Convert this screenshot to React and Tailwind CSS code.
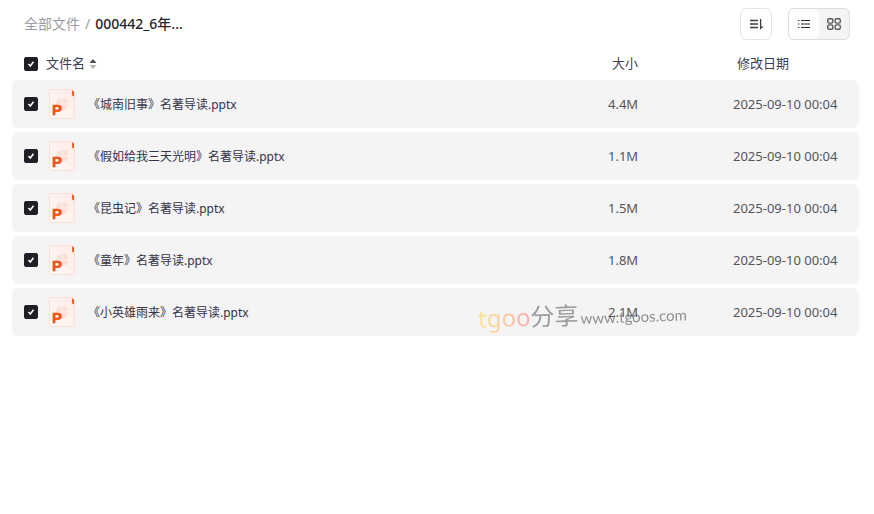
import { useState } from 'react';

const FILES = [
    { name: '《城南旧事》名著导读.pptx', size: '4.4M', date: '2025-09-10 00:04' },
    { name: '《假如给我三天光明》名著导读.pptx', size: '1.1M', date: '2025-09-10 00:04' },
    { name: '《昆虫记》名著导读.pptx', size: '1.5M', date: '2025-09-10 00:04' },
    { name: '《童年》名著导读.pptx', size: '1.8M', date: '2025-09-10 00:04' },
    { name: '《小英雄雨来》名著导读.pptx', size: '2.1M', date: '2025-09-10 00:04' },
];

function Checkbox({ label, checked, onChange }) {
    return (
        <span className="relative flex size-3.5 shrink-0">
            <input type="checkbox" aria-label={label} checked={checked} onChange={onChange} className="peer size-3.5 appearance-none rounded-xs border border-[#c4c6cc] bg-white checked:border-[#1f2026] checked:bg-[#1f2026]" />
            <svg viewBox="0 0 14 14" fill="none" stroke="#fff" strokeWidth="1.5" className="pointer-events-none absolute inset-0 hidden size-3.5 peer-checked:block">
                <path d="M4.5 7 6.3 9 9.5 4.8" />
            </svg>
        </span>
    );
}

function PptIcon() {
    return (
        <svg viewBox="0 0 26 30" className="h-[30px] w-[26px] shrink-0" aria-hidden="true">
            <defs>
                <linearGradient id="sheet" x1="0" y1="1" x2="1" y2="0">
                    <stop offset="0" stopColor="#fff8f5" />
                    <stop offset="1" stopColor="#fdece6" />
                </linearGradient>
            </defs>
            <path d="M1.5.5H23L25.5 6V28.5Q25.5 29.5 24.5 29.5H1.5Q.5 29.5.5 28.5V1.5Q.5.5 1.5.5Z" fill="url(#sheet)" stroke="#fbdfd5" />
            <path d="M23 1.2 25 2.6V7.5L23 6.5Z" fill="#e8602c" />
            <path d="M12.6 9.4A6 6 0 1 0 18.6 15.4H12.6Z" fill="#fadfd6" />
            <path d="M13.6 8.4A6 6 0 0 1 19.4 14.2H13.6Z" fill="#fadfd6" />
            <text x="3" y="26" fontSize="15" fontWeight="700" fill="#ea5414" stroke="#ea5414" strokeWidth=".5" className="font-['Liberation_Sans',sans-serif]">P</text>
        </svg>
    );
}

export default function App() {
    const [selected, setSelected] = useState(FILES.map(() => true));
    const allSelected = selected.every(Boolean);
    const toggle = (i) => setSelected(selected.map((s, k) => (k === i ? !s : s)));

    return (
        <div className="bg-white pt-2 pr-[15px] pl-3 font-['Noto_Sans','Noto_Sans_CJK_SC',sans-serif]">
            {/* Toolbar */}
            <header className="flex h-8 items-center justify-between pr-[9px] pl-3">
                <nav className="flex items-center gap-[5px] text-sm text-[#9a9ba1]">
                    <a href="#all">全部文件</a>
                    <span>/</span>
                    <a href="#folder" className="font-medium text-[#25262b]">000442_6年...</a>
                </nav>
                <div className="flex gap-4">
                    <button type="button" aria-label="排序" className="flex size-8 items-center justify-center rounded-md border border-[#e4e4e7] bg-white">
                        <svg viewBox="0 0 16 16" className="size-4" fill="none" stroke="#3b3c42" strokeWidth="1.3">
                            <path d="M2 4.5H10M2 8H10M2 11.5H10M12.6 3V12.4L14.6 10.6" />
                        </svg>
                    </button>
                    <div className="flex overflow-hidden rounded-md border border-[#dcdcdf] bg-[#f4f4f4]">
                        <button type="button" aria-label="列表" className="flex h-[30px] w-[30px] items-center justify-center rounded-md bg-white">
                            <svg viewBox="0 0 16 16" className="size-4" fill="none" stroke="#25262b" strokeWidth="1.1">
                                <path d="M2 4.5H3.4M5 4.5H14M2 8H3.4M5 8H14M2 11.5H3.4M5 11.5H14" />
                            </svg>
                        </button>
                        <button type="button" aria-label="网格" className="flex h-[30px] w-[30px] items-center justify-center">
                            <svg viewBox="0 0 16 16" className="size-4" fill="none" stroke="#55565b" strokeWidth="1.4">
                                <rect x="1.7" y="2.7" width="5.2" height="4.4" rx="1.6" />
                                <rect x="9.1" y="2.7" width="5.2" height="4.4" rx="1.6" />
                                <rect x="1.7" y="8.9" width="5.2" height="4.4" rx="1.6" />
                                <rect x="9.1" y="8.9" width="5.2" height="4.4" rx="1.6" />
                            </svg>
                        </button>
                    </div>
                </div>
            </header>

            {/* File list */}
            <main className="relative pt-2">
                <table className="w-full table-fixed border-separate border-spacing-x-0 border-spacing-y-1 text-left text-[13px] text-[#55555c]">
                    <thead className="text-[#3d3d55]">
                        <tr className="h-6">
                            <th className="p-0 pl-3 font-normal">
                                <div className="flex items-center gap-2">
                                    <Checkbox label="全选" checked={allSelected} onChange={() => setSelected(FILES.map(() => !allSelected))} />
                                    <button type="button" className="flex items-center gap-1">
                                        文件名
                                        <svg viewBox="0 0 8 12" className="h-3 w-2" aria-hidden="true">
                                            <path d="M1.3 4.5 4 1.6 6.7 4.5Z" fill="#4a4b50" stroke="#4a4b50" strokeWidth="1" strokeLinejoin="round" />
                                            <path d="M1.3 7.5 4 10.4 6.7 7.5Z" fill="#b4b5b9" stroke="#b4b5b9" strokeWidth="1" strokeLinejoin="round" />
                                        </svg>
                                    </button>
                                </div>
                            </th>
                            <th className="w-[125px] p-0 pl-1 font-normal">大小</th>
                            <th className="w-[126px] p-0 pl-1 font-normal">修改日期</th>
                        </tr>
                    </thead>
                    <tbody>
                        {FILES.map((file, i) => (
                            <tr key={file.name} className="h-12">
                                <td className="rounded-l-md bg-[#f4f4f4] p-0 pl-3">
                                    <div className="flex items-center">
                                        <Checkbox label={file.name} checked={selected[i]} onChange={() => toggle(i)} />
                                        <span className="ml-[11px] flex"><PptIcon /></span>
                                        <span className="ml-[13px] truncate pt-0.5 text-xs text-[#33334a]">{file.name}</span>
                                    </div>
                                </td>
                                <td className="bg-[#f4f4f4] p-0 pt-0.5"><span className="relative z-10">{file.size}</span></td>
                                <td className="rounded-r-md bg-[#f4f4f4] p-0 pt-0.5 whitespace-nowrap">{file.date}</td>
                            </tr>
                        ))}
                    </tbody>
                </table>

                {/* Watermark */}
                <div aria-hidden="true" className="pointer-events-none absolute right-[172px] bottom-1 flex -rotate-2 items-baseline whitespace-nowrap text-2xl leading-9 opacity-80">
                    <span className="bg-linear-to-r from-[#f8e27c] to-[#ff9a9a] bg-clip-text text-transparent">tgoo</span>
                    <span className="text-[#85858b]">分享</span>
                    <span className="ml-0.5 font-[Lato,sans-serif] text-[15px] text-[#76767c]">www.tgoos.com</span>
                </div>
            </main>
        </div>
    );
}
